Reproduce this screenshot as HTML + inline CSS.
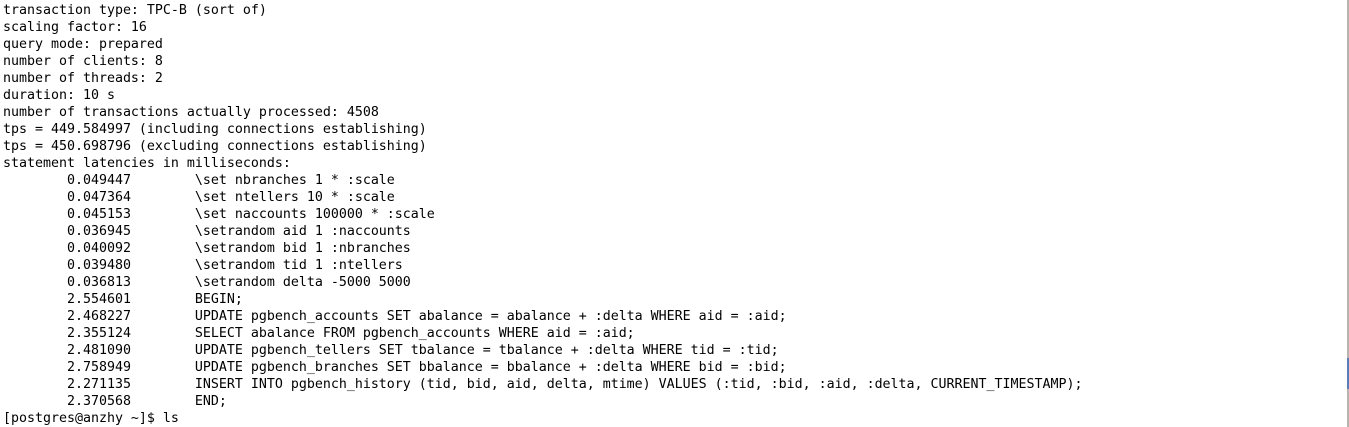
<!DOCTYPE html>
<html><head><meta charset="utf-8"><style>
html,body{margin:0;padding:0;background:#fff;width:1349px;height:427px;overflow:hidden;position:relative}
pre{margin:0;position:absolute;left:3px;top:2px;font-family:"DejaVu Sans Mono","Liberation Mono",monospace;font-size:13.29px;line-height:17px;color:#000}
.sb{position:absolute;left:1347px;top:0;width:2px;height:427px;background:#b8b4b0}
.th{position:absolute;left:1347px;top:358px;width:2px;height:31px;background:#5a7fb8}
</style></head><body>
<pre>transaction type: TPC-B (sort of)
scaling factor: 16
query mode: prepared
number of clients: 8
number of threads: 2
duration: 10 s
number of transactions actually processed: 4508
tps = 449.584997 (including connections establishing)
tps = 450.698796 (excluding connections establishing)
statement latencies in milliseconds:
        0.049447        \set nbranches 1 * :scale
        0.047364        \set ntellers 10 * :scale
        0.045153        \set naccounts 100000 * :scale
        0.036945        \setrandom aid 1 :naccounts
        0.040092        \setrandom bid 1 :nbranches
        0.039480        \setrandom tid 1 :ntellers
        0.036813        \setrandom delta -5000 5000
        2.554601        BEGIN;
        2.468227        UPDATE pgbench_accounts SET abalance = abalance + :delta WHERE aid = :aid;
        2.355124        SELECT abalance FROM pgbench_accounts WHERE aid = :aid;
        2.481090        UPDATE pgbench_tellers SET tbalance = tbalance + :delta WHERE tid = :tid;
        2.758949        UPDATE pgbench_branches SET bbalance = bbalance + :delta WHERE bid = :bid;
        2.271135        INSERT INTO pgbench_history (tid, bid, aid, delta, mtime) VALUES (:tid, :bid, :aid, :delta, CURRENT_TIMESTAMP);
        2.370568        END;
[postgres@anzhy ~]$ ls</pre>
<div class="sb"></div><div class="th"></div>
</body></html>
